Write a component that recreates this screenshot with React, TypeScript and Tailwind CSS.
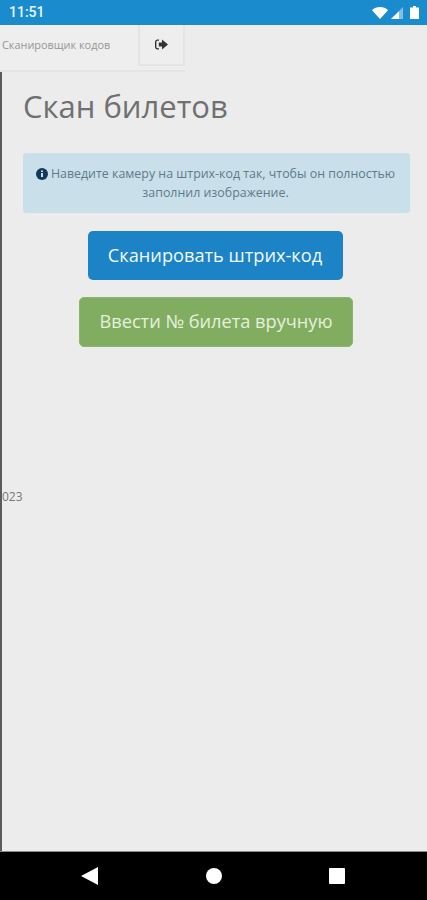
import React from "react";

const font = "font-['Open_Sans','Noto_Sans',sans-serif]";

const StatusBar = () => (
  <div className="h-[25px] shrink-0 bg-[#1a8ccd] flex items-center justify-between pl-[9px] pr-[8px] font-['Roboto',sans-serif]">
    <span className="text-[14px] font-medium text-[#eaf5fb]">11:51</span>
    <div className="flex items-center gap-[3px]">
      <svg width="16" height="12" viewBox="0 0 16 12" fill="white">
        <path d="M0 3.2C2 1.2 5 0 8 0s6 1.2 8 3.2L8 12z" />
      </svg>
      <svg width="12" height="12" viewBox="0 0 12 12">
        <path d="M12 0v12H0z" fill="white" fillOpacity="0.45" />
        <path d="M8 4.2V12H0z" fill="white" />
      </svg>
      <svg width="9" height="13" viewBox="0 0 9 13" fill="white" className="ml-[4px]">
        <path d="M3 0h3v1.5h3V13H0V1.5h3z" />
      </svg>
    </div>
  </div>
);

const NavBar = () => (
  <div className="w-[185px] h-[47px] shrink-0 flex items-start border-b-2 border-[#e4e4e4] bg-[#eeeeee]">
    <div className="w-[138px] h-[41px] flex items-center pl-[2px]">
      <span className="text-[10.9px] text-[#969696] whitespace-nowrap">Сканировщик кодов</span>
    </div>
    <div className="w-[47px] h-[41px] flex items-center justify-center border-l-2 border-r-2 border-b-2 border-[#e4e4e4]">
      <svg width="13" height="11" viewBox="0 0 13 11" fill="#333333">
        <path d="M7 0.5L13 5.5 7 10.500V7.500H3.800V3.500H7z" />
        <path d="M4 0.500H2.500C1.100 0.500 0 1.600 0 3V8C0 9.400 1.100 10.500 2.500 10.500H4V9.200H2.600C1.900 9.200 1.400 8.700 1.400 8V3C1.400 2.300 1.900 1.800 2.600 1.800H4z" />
      </svg>
    </div>
  </div>
);

const SystemNav = () => (
  <div className="h-[49px] shrink-0 bg-black flex items-center border-t border-[#8a8a8a]">
    <svg width="17" height="18" viewBox="0 0 17 18" fill="white" className="ml-[81px] -mt-[1px]">
      <path d="M17 0v18L0 9z" />
    </svg>
    <div className="ml-[108px] w-4 h-4 rounded-full bg-white -mt-[1px]" />
    <div className="ml-[107px] w-4 h-4 rounded-[1px] bg-white -mt-[1px]" />
  </div>
);

export default function App() {
  return (
    <div className={`h-[900px] w-[427px] flex flex-col overflow-hidden bg-[#ececec] ${font}`}>
      <StatusBar />
      <NavBar />

      <div className="flex-1 border-l-2 border-[#5c5c5c]">
        <div className="pl-[21px] pr-[17px]">
          <h1 className="mt-[13px] text-[31px] leading-[42px] font-normal text-[#707070]">Скан билетов</h1>

          <div className="mt-[26px] h-[60px] rounded-[3px] bg-[#c9e0eb] flex items-center justify-center text-center text-[12.4px] leading-[19px] text-[#5f7a88] pl-2 pr-[10px]">
            <p>
              <svg width="12" height="12" viewBox="0 0 12 12" className="inline-block mr-[3px] -mt-[2px]">
                <circle cx="6" cy="6" r="6" fill="#12395a" />
                <rect x="5" y="5" width="2" height="4" fill="#c9e0eb" />
                <rect x="5" y="2.500" width="2" height="1.500" fill="#c9e0eb" />
              </svg>
              Наведите камеру на штрих-код так, чтобы он полностью заполнил изображение.
            </p>
          </div>

          <div className="mt-[18px] flex flex-col items-center pr-[3px] gap-[17px]">
            <button className="w-[255px] h-[49px] rounded-[5px] bg-[#1c84c6] text-[#f2f8fc] text-[18.2px]">
              Сканировать штрих-код
            </button>
            <button className="ml-[2px] w-[274px] h-[50px] rounded-[5px] bg-[#81ad61] border border-[#8cb56e] text-[#e6f0dc] text-[18.2px]">
              Ввести № билета вручную
            </button>
          </div>
        </div>

        <div className="mt-[142px] text-[12px] leading-[16px] text-[#777777]">023</div>
      </div>

      <SystemNav />
    </div>
  );
}
